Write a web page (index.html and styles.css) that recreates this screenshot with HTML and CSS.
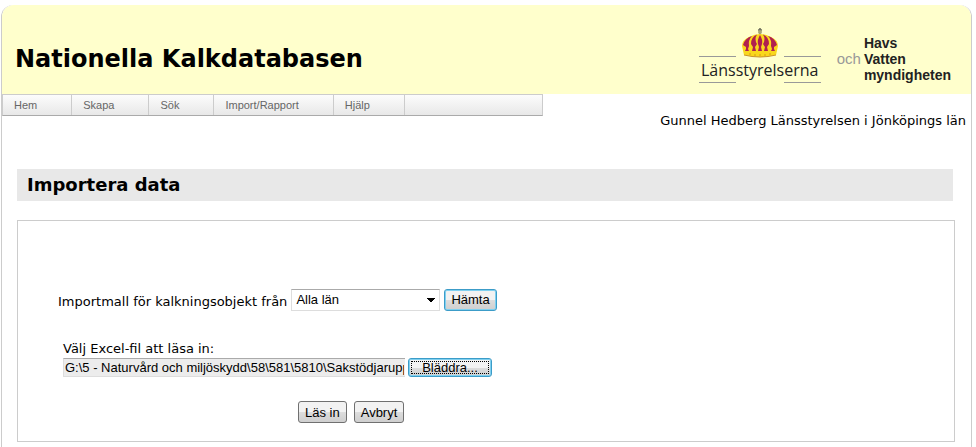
FILE: index.html
```
<!DOCTYPE html>
<html lang="sv">
  <head>
    <meta charset="UTF-8" />
    <meta name="viewport" content="width=device-width, initial-scale=1.0" />
    <title>Nationella Kalkdatabasen</title>
    <link rel="stylesheet" href="styles.css">
  </head>
  <body>
    <div class="page">
      <header class="header">
        <h1>Nationella Kalkdatabasen</h1>
        <div class="logos">
          <div class="logo-lst">
            <svg class="crown" width="38" height="32" viewBox="0 0 38 32" aria-hidden="true">
              <path d="M19 2v7M17 4h4" stroke="#6d6d5a" stroke-width="1.6" />
              <circle cx="19" cy="6" r="2" fill="#a9a878" />
              <path d="M3 29L1 20Q1 14 8 11Q14 8 19 8Q24 8 30 11Q37 14 37 20L35 29Q19 33 3 29z" fill="#f9d71c" />
              <!-- left, centre and right cloth -->
              <path d="M11 10Q4 12 2 19l3 2v2l-1 2h4l-1-2 1-3Q7 14 11 10z" fill="#b0204f" />
              <path d="M16 8.500Q10 11 10 18l2 3-1 4h4l-1-4 2-3Q13 13 16 8.500z" fill="#b0204f" />
              <path d="M19 9q-3 5-2 9l1 3-1 4h4l-1-4 1-3q1-4-2-9z" fill="#b0204f" />
              <path d="M22 8.500Q28 11 28 18l-2 3 1 4h-4l1-4-2-3Q25 13 22 8.500z" fill="#b0204f" />
              <path d="M27 10Q34 12 36 19l-3 2v2l1 2h-4l1-2-1-3Q31 14 27 10z" fill="#b0204f" />
              <path d="M3 29Q19 33 35 29" fill="none" stroke="#c9922a" />
              <path d="M8 28h2M13 29h2M18 29h2M23 29h2M28 28h2" stroke="#d89b16" />
            </svg>
            <span class="logo-lst__name">Länsstyrelserna</span>
          </div>
          <div class="logo-hav">
            <span class="logo-hav__och">och</span>
            <span>Havs<br>Vatten<br>myndigheten</span>
          </div>
        </div>
      </header>

      <div class="topbar">
        <nav>
          <ul class="menu">
            <li><a href="#">Hem</a></li>
            <li><a href="#">Skapa</a></li>
            <li><a href="#">Sök</a></li>
            <li><a href="#">Import/Rapport</a></li>
            <li><a href="#">Hjälp</a></li>
          </ul>
        </nav>
        <div class="user">Gunnel Hedberg Länsstyrelsen i Jönköpings län</div>
      </div>

      <main>
        <h2>Importera data</h2>
        <form class="panel">
          <div class="row">
            <label for="lan">Importmall för kalkningsobjekt från</label>
            <select id="lan">
              <option>Alla län</option>
            </select>
            <button type="button" class="btn btn--active">Hämta</button>
          </div>
          <div class="file">
            <label for="fil">Välj Excel-fil att läsa in:</label>
            <div class="file__row">
              <input type="text" id="fil" readonly value="G:\5 - Naturvård och miljöskydd\58\581\5810\Sakstödjarupphandling" />
              <button type="button" class="btn btn--active btn--browse"><span>Bläddra...</span></button>
            </div>
          </div>
          <div class="actions">
            <button type="submit" class="btn">Läs in</button>
            <button type="reset" class="btn">Avbryt</button>
          </div>
        </form>
      </main>
    </div>
  </body>
</html>
```
FILE: styles.css
```
* {
  box-sizing: border-box;
}

body {
  margin: 0;
  padding: 5px 4px 0 1px;
  min-height: 100vh;
  display: flex;
  background: #fff;
  color: #000;
  font-family: Verdana, "DejaVu Sans", sans-serif;
  font-size: 13px;
}

.page {
  flex: 1;
  border: 1px solid #ccc;
  border-width: 0 1px;
  border-radius: 12px 12px 0 0;
}

/* header */
.header {
  display: flex;
  justify-content: space-between;
  height: 89px;
  padding: 0 20px 0 13px;
  background: #ffffcc;
  border-radius: 12px 12px 0 0;
}

h1 {
  margin: 0;
  padding-top: 39px;
  font-size: 24px;
  line-height: 30px;
}

.logos {
  display: flex;
  gap: 16px;
  padding-top: 21px;
}

.logo-lst {
  width: 122px;
  display: flex;
  flex-direction: column;
  align-items: center;
}

.crown {
  display: block;
}

.logo-lst__name {
  width: 100%;
  height: 27px;
  margin-top: -2px;
  border: solid #999;
  border-width: 1px 0;
  /* the rules are open in the middle */
  border-image: linear-gradient(to right, #999 37px, transparent 37px, transparent 85px, #999 85px) 1;
  font-family: "Open Sans", sans-serif;
  font-size: 16px;
  line-height: 26px;
  text-align: center;
  color: #222;
}

.logo-hav {
  display: flex;
  gap: 3px;
  padding-top: 9px;
  font-family: "Liberation Sans", Arial, sans-serif;
  font-size: 14px;
  font-weight: bold;
  line-height: 16px;
  color: #222;
}

.logo-hav__och {
  padding-top: 16px;
  font-size: 15px;
  font-weight: normal;
  color: #999;
}

/* menu and user name */
.topbar {
  display: flex;
  justify-content: space-between;
  min-height: 46px;
}

.menu {
  display: flex;
  width: 541px;
  height: 22px;
  margin: 0;
  padding: 0;
  list-style: none;
  background: linear-gradient(#fcfcfc, #e8e8e8);
  border: 1px solid #ccc;
  border-bottom-color: #aaa;
}

.menu li {
  border-right: 1px solid #ccc;
}

.menu a {
  display: block;
  padding: 0 34px 0 11px;
  font-family: "Liberation Sans", Arial, sans-serif;
  font-size: 11px;
  line-height: 20px;
  color: #666;
  text-decoration: none;
}

.user {
  padding: 18px 5px 0 0;
  line-height: 18px;
}

/* content */
main {
  padding: 29px 16px 0 15px;
}

h2 {
  margin: 0 2px 19px 0;
  padding: 0 10px;
  background: #e8e8e8;
  font-size: 18px;
  line-height: 32px;
}

.panel {
  min-height: 222px;
  padding: 67px 40px 18px;
  border: 1px solid #ccc;
}

.row {
  display: flex;
  align-items: center;
  gap: 4px;
}

label {
  line-height: 18px;
}

.row label {
  padding-top: 5px;
}

select,
input,
.btn {
  font-family: "Liberation Sans", Arial, sans-serif;
  font-size: 13px;
  color: #000;
}

select {
  width: 149px;
  height: 22px;
  padding: 0 4px;
  border: 1px solid #ddd;
  border-top-color: #aaa;
  appearance: none;
  /* drop-down arrow */
  background: conic-gradient(from -45deg at 50% 100%, #000 90deg, transparent 90deg) right 4px center / 8px 4px no-repeat #fff;
}

.btn {
  height: 22px;
  padding: 0 6px;
  border: 1px solid #707070;
  border-radius: 3px;
  background: linear-gradient(#f2f2f2 50%, #ddd 50%, #cfcfcf);
}

.btn--active {
  border-color: #3c9cc8;
  box-shadow: inset 0 0 0 1px #7fd0f0;
}

.file {
  margin: 29px 0 0 5px;
}

.file__row {
  display: flex;
  gap: 3px;
}

input {
  width: 342px;
  height: 19px;
  padding: 0 1px;
  border: 1px solid #ddd;
  border-top-color: #aaa;
  border-right: 0;
  background: #ececec;
}

.btn--browse {
  width: 84px;
  height: 19px;
  padding: 0 2px;
}

.btn--browse span {
  display: block;
  height: 13px;
  border: 1px dotted #000;
  line-height: 11px;
}

.actions {
  display: flex;
  gap: 7px;
  margin: 24px 0 0 240px;
}
```
